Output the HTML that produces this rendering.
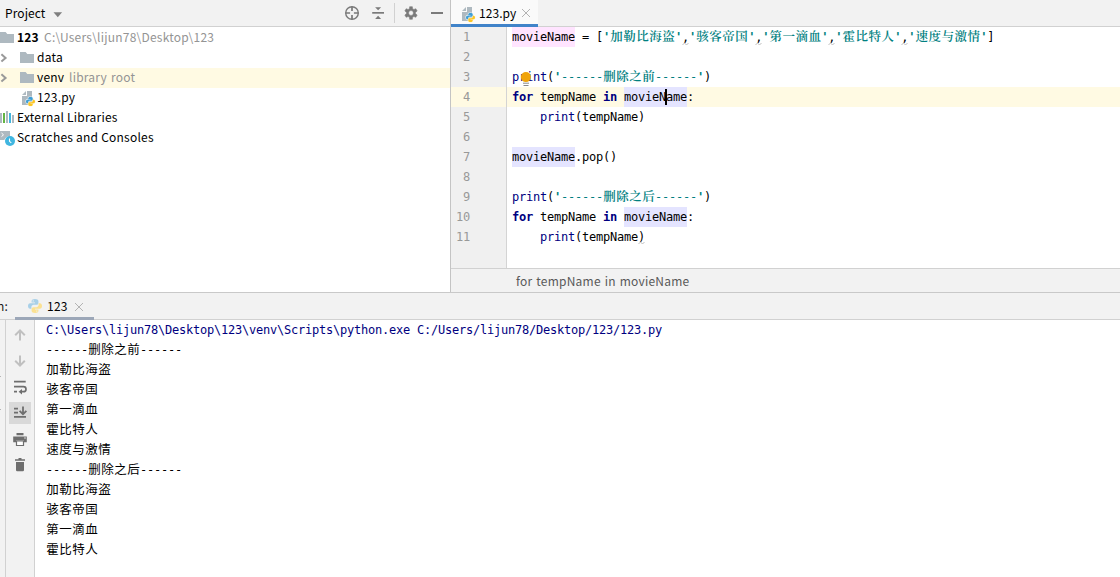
<!DOCTYPE html>
<html><head><meta charset="utf-8">
<style>
*{box-sizing:border-box;margin:0;padding:0}
html,body{width:1120px;height:577px;overflow:hidden;background:#fff}
body{position:relative;font-family:"Liberation Sans","Noto Sans CJK SC",sans-serif;font-size:12px;color:#000}
.abs{position:absolute}
.ui{font-family:"Noto Sans CJK SC","Liberation Sans",sans-serif;font-size:12px;letter-spacing:0.22px;white-space:nowrap}
.mono{font-family:"DejaVu Sans Mono","Noto Sans CJK SC",monospace;font-size:12px;letter-spacing:-0.224px;white-space:pre}
/* left project panel */
#ph{left:0;top:0;width:450px;height:27px;background:#f2f2f2;border-bottom:1px solid #d1d1d1}
#tree{left:0;top:27px;width:450px;height:265px;background:#fff}
.row{position:absolute;left:0;width:450px;height:20px;line-height:20px}
.row span{position:absolute;top:-1px}
.gray{color:#949494}
#vdiv{left:450px;top:0;width:1px;height:292px;background:#c4c4c4}
/* editor */
#tabs{left:451px;top:0;width:669px;height:27px;background:#f2f2f2;border-bottom:1px solid #d1d1d1}
#tab{left:451px;top:0;width:87px;height:24px;background:#fafafa}
#tabul{left:451px;top:24px;width:87px;height:3px;background:#4083c9}
#gutter{left:451px;top:27px;width:55px;height:241px;background:#f0f0f0}
#gline{left:506px;top:27px;width:1px;height:241px;background:#d4d4d4}
.ln{position:absolute;left:451px;width:55px;height:20px;line-height:20px;color:#999;font-family:"DejaVu Sans Mono",monospace;font-size:12px;letter-spacing:-0.224px}
.ln span{position:absolute;right:36px}
.cl{position:absolute;left:512px;height:20px;line-height:20px}
.kw{color:#000080;font-weight:bold}
.bi{color:#000080}
.st{color:#008080;font-weight:bold;font-family:"DejaVu Sans Mono","Noto Serif CJK SC",monospace}
.hw{background:#ffe4ff;padding:3px 0 3.03px}
.hr{background:#e4e4ff;padding:3px 0 3.03px}
#crow{left:451px;top:87px;width:669px;height:20px;background:#fffae3}
#crowg{left:451px;top:87px;width:55px;height:20px;background:#fcfaed}
#bc{left:451px;top:268px;width:669px;height:24px;background:#f2f2f2;border-top:1px solid #d1d1d1}
/* run panel */
#hsep{left:0;top:292px;width:1120px;height:1px;background:#c9c9c9}
#rh{left:0;top:293px;width:1120px;height:27px;background:#f2f2f2;border-bottom:1px solid #d1d1d1}
#rul{left:15px;top:317px;width:79px;height:3px;background:#9ca7b8}
#ls{left:0;top:320px;width:5px;height:257px;background:#f2f2f2}
#lsl{left:5px;top:320px;width:1px;height:257px;background:#d1d1d1}
#tb{left:6px;top:320px;width:28px;height:257px;background:#f2f2f2}
#tbl{left:34px;top:320px;width:1px;height:257px;background:#d1d1d1}
.co{position:absolute;left:46px;height:20px;line-height:20px;font-family:"DejaVu Sans Mono","Noto Sans CJK SC",monospace;font-size:12px;letter-spacing:-0.224px;white-space:pre}
.cj{font-family:"Noto Sans CJK SC",sans-serif;font-size:12.5px;letter-spacing:0.5px;line-height:0;margin-left:0.25px;margin-right:-0.25px}
.st .cj{font-family:"Noto Serif CJK SC",serif;font-weight:600}
.nb{font-weight:normal}
</style></head><body>
<div id="ph" class="abs"></div>
<div id="tree" class="abs"></div>
<div id="vdiv" class="abs"></div>
<div id="tabs" class="abs"></div>
<div id="tab" class="abs"></div>
<div id="tabul" class="abs"></div>
<div id="gutter" class="abs"></div>
<div id="crow" class="abs"></div>
<div id="gline" class="abs"></div>
<div id="bc" class="abs"></div>
<div id="hsep" class="abs"></div>
<div id="rh" class="abs"></div>
<div id="rul" class="abs"></div>
<div id="ls" class="abs"></div><div id="lsl" class="abs"></div>
<div id="tb" class="abs"></div><div id="tbl" class="abs"></div>

<!-- project header -->
<div class="abs ui" style="left:5px;top:0;height:26px;line-height:26px;letter-spacing:0.08px" id="t_project">Project</div>
<svg class="abs" style="left:53px;top:12px" width="10" height="6" viewBox="0 0 10 6"><path d="M0.5 0.3h8.6l-4.3 4.9z" fill="#7f7f7f"/></svg>
<!-- tree -->
<div class="row" style="top:68px;background:#fffae3"></div>
<div class="row ui" style="top:28px"><span style="left:17px;font-weight:bold" id="t_123">123</span><span class="gray" style="left:44px" id="t_path">C:\Users\lijun78\Desktop\123</span></div>
<div class="row ui" style="top:48px"><span style="left:37px" id="t_data">data</span></div>
<div class="row ui" style="top:68px"><span style="left:37px" id="t_venv">venv</span><span class="gray" style="left:69px;word-spacing:1px" id="t_lib">library root</span></div>
<div class="row ui" style="top:88px"><span style="left:37px" id="t_py">123.py</span></div>
<div class="row ui" style="top:108px"><span style="left:17px" id="t_ext">External Libraries</span></div>
<div class="row ui" style="top:128px"><span style="left:17px" id="t_scr">Scratches and Consoles</span></div>
<svg class="abs" style="left:-1px;top:30px" width="16" height="16" viewBox="0 0 16 16"><path d="M1 2h5.6l1.7 2H15v9H1z" fill="#aeb9c0"/></svg><svg class="abs" style="left:-1px;top:50px" width="16" height="16" viewBox="0 0 16 16"><path d="M2.4 4.2L6.6 7.9L2.4 11.6" fill="none" stroke="#9a9a9a" stroke-width="2"/></svg><svg class="abs" style="left:19px;top:50px" width="16" height="16" viewBox="0 0 16 16"><path d="M1 2h5.6l1.7 2H15v9H1z" fill="#aeb9c0"/></svg><svg class="abs" style="left:-1px;top:70px" width="16" height="16" viewBox="0 0 16 16"><path d="M2.4 4.2L6.6 7.9L2.4 11.6" fill="none" stroke="#9a9a9a" stroke-width="2"/></svg><svg class="abs" style="left:19px;top:70px" width="16" height="16" viewBox="0 0 16 16"><path d="M1 2h5.6l1.7 2H15v9H1z" fill="#aeb9c0"/></svg><svg class="abs" style="left:19px;top:90px" width="17" height="17" viewBox="0 0 17 17"><path d="M7 1L3 5h4z" fill="#aeb9c0"/><path d="M8 1v5H3v9h10V1z" fill="#aeb9c0"/>
<g transform="translate(7,7) scale(0.643)"><path d="M6.9 0C5 0 3.6 0.7 3.6 2V3.6H7V4.2H2.2C0.8 4.2 0 5.4 0 7C0 8.6 0.8 9.8 2.2 9.8H3.4V8C3.4 6.8 4.4 5.8 5.6 5.8H8.6C9.6 5.8 10.4 5 10.4 4V2C10.4 0.8 9 0 6.9 0Z M7.1 14C9 14 10.4 13.3 10.4 12V10.4H7V9.8H11.8C13.2 9.8 14 8.6 14 7C14 5.4 13.2 4.2 11.8 4.2H10.6V6C10.6 7.2 9.6 8.2 8.4 8.2H5.4C4.4 8.2 3.6 9 3.6 10V12C3.6 13.2 5 14 7.1 14Z" fill="#fff" stroke="#fff" stroke-width="1.8" stroke-linejoin="round"/><path d="M6.9 0C5 0 3.6 0.7 3.6 2V3.6H7V4.2H2.2C0.8 4.2 0 5.4 0 7C0 8.6 0.8 9.8 2.2 9.8H3.4V8C3.4 6.8 4.4 5.8 5.6 5.8H8.6C9.6 5.8 10.4 5 10.4 4V2C10.4 0.8 9 0 6.9 0Z" fill="#3f9ed6" stroke="#3f9ed6" stroke-width="0.3"/><path d="M7.1 14C9 14 10.4 13.3 10.4 12V10.4H7V9.8H11.8C13.2 9.8 14 8.6 14 7C14 5.4 13.2 4.2 11.8 4.2H10.6V6C10.6 7.2 9.6 8.2 8.4 8.2H5.4C4.4 8.2 3.6 9 3.6 10V12C3.6 13.2 5 14 7.1 14Z" fill="#fcc624" stroke="#fcc624" stroke-width="0.3"/></g></svg><svg class="abs" style="left:-1px;top:110px" width="16" height="16" viewBox="0 0 16 16"><rect x="1" y="3" width="2" height="10" fill="#aeb9c0"/><rect x="4" y="3" width="2" height="10" fill="#62b543"/><rect x="7" y="1" width="2" height="12" fill="#aeb9c0"/><rect x="10" y="3" width="2" height="10" fill="#40b6e0"/><rect x="13" y="5" width="2" height="8" fill="#aeb9c0"/></svg><svg class="abs" style="left:-1px;top:130px" width="17" height="17" viewBox="0 0 17 17"><path d="M1 1h10v5.2A5.8 5.8 0 0 0 5.3 10H1z" fill="#aeb9c0"/><path d="M2.5 3l2 1.8-2 1.8" fill="none" stroke="#fff" stroke-width="1"/><circle cx="11" cy="11" r="5" fill="#40b6e0"/><path d="M10.5 8.5v2.8l1.8 1.6" fill="none" stroke="#fff" stroke-width="1.1"/></svg><svg class="abs" style="left:344px;top:5px" width="16" height="16" viewBox="0 0 16 16"><circle cx="8" cy="8" r="6.3" fill="none" stroke="#7a7a7a" stroke-width="1.4"/><path d="M8 1.5v4.6M8 9.9v4.6M1.5 8h4.6M9.9 8h4.6" stroke="#7a7a7a" stroke-width="1.7"/></svg><svg class="abs" style="left:370px;top:5px" width="16" height="16" viewBox="0 0 16 16"><path d="M2.2 7h11.8v1.7H2.2z" fill="#7a7a7a"/><path d="M5.1 2.2h6L8.1 5.2z M5.1 13.9h6L8.1 10.7z" fill="#7a7a7a"/></svg><div class="abs" style="left:394px;top:3px;width:1px;height:20px;background:#d1d1d1"></div><svg class="abs" style="left:403px;top:5px" width="16" height="16" viewBox="0 0 16 16"><path d="M6.65 1.64 L9.35 1.64 L9.62 3.69 L10.92 4.44 L12.83 3.65 L14.18 5.99 L12.54 7.25 L12.54 8.75 L14.18 10.01 L12.83 12.35 L10.92 11.56 L9.62 12.31 L9.35 14.36 L6.65 14.36 L6.38 12.31 L5.08 11.56 L3.17 12.35 L1.82 10.01 L3.46 8.75 L3.46 7.25 L1.82 5.99 L3.17 3.65 L5.08 4.44 L6.38 3.69Z M8 5.6a2.4 2.4 0 1 0 0.001 0z" fill="#7a7a7a" fill-rule="evenodd" stroke="#7a7a7a" stroke-width="0.5" stroke-linejoin="round"/></svg><div class="abs" style="left:431px;top:12px;width:12px;height:2px;background:#7a7a7a"></div><svg class="abs" style="left:459px;top:6px" width="17" height="17" viewBox="0 0 17 17"><path d="M7 1L3 5h4z" fill="#aeb9c0"/><path d="M8 1v5H3v9h10V1z" fill="#aeb9c0"/>
<g transform="translate(7,7) scale(0.643)"><path d="M6.9 0C5 0 3.6 0.7 3.6 2V3.6H7V4.2H2.2C0.8 4.2 0 5.4 0 7C0 8.6 0.8 9.8 2.2 9.8H3.4V8C3.4 6.8 4.4 5.8 5.6 5.8H8.6C9.6 5.8 10.4 5 10.4 4V2C10.4 0.8 9 0 6.9 0Z M7.1 14C9 14 10.4 13.3 10.4 12V10.4H7V9.8H11.8C13.2 9.8 14 8.6 14 7C14 5.4 13.2 4.2 11.8 4.2H10.6V6C10.6 7.2 9.6 8.2 8.4 8.2H5.4C4.4 8.2 3.6 9 3.6 10V12C3.6 13.2 5 14 7.1 14Z" fill="#fff" stroke="#fff" stroke-width="1.8" stroke-linejoin="round"/><path d="M6.9 0C5 0 3.6 0.7 3.6 2V3.6H7V4.2H2.2C0.8 4.2 0 5.4 0 7C0 8.6 0.8 9.8 2.2 9.8H3.4V8C3.4 6.8 4.4 5.8 5.6 5.8H8.6C9.6 5.8 10.4 5 10.4 4V2C10.4 0.8 9 0 6.9 0Z" fill="#3f9ed6" stroke="#3f9ed6" stroke-width="0.3"/><path d="M7.1 14C9 14 10.4 13.3 10.4 12V10.4H7V9.8H11.8C13.2 9.8 14 8.6 14 7C14 5.4 13.2 4.2 11.8 4.2H10.6V6C10.6 7.2 9.6 8.2 8.4 8.2H5.4C4.4 8.2 3.6 9 3.6 10V12C3.6 13.2 5 14 7.1 14Z" fill="#fcc624" stroke="#fcc624" stroke-width="0.3"/></g></svg><svg class="abs" style="left:521px;top:8px" width="10" height="10" viewBox="0 0 10 10"><path d="M1 1l8 8M9 1l-8 8" stroke="#b3b3b3" stroke-width="1" fill="none"/></svg><svg class="abs" style="left:74px;top:302px" width="10" height="10" viewBox="0 0 10 10"><path d="M1 1l8 8M9 1l-8 8" stroke="#b3b3b3" stroke-width="1" fill="none"/></svg><svg class="abs" style="left:28px;top:299px" width="14" height="14" viewBox="0 0 14 14"><path d="M6.9 0C5 0 3.6 0.7 3.6 2V3.6H7V4.2H2.2C0.8 4.2 0 5.4 0 7C0 8.6 0.8 9.8 2.2 9.8H3.4V8C3.4 6.8 4.4 5.8 5.6 5.8H8.6C9.6 5.8 10.4 5 10.4 4V2C10.4 0.8 9 0 6.9 0Z" fill="#a8d0e8"/><path d="M7.1 14C9 14 10.4 13.3 10.4 12V10.4H7V9.8H11.8C13.2 9.8 14 8.6 14 7C14 5.4 13.2 4.2 11.8 4.2H10.6V6C10.6 7.2 9.6 8.2 8.4 8.2H5.4C4.4 8.2 3.6 9 3.6 10V12C3.6 13.2 5 14 7.1 14Z" fill="#fbe192"/><circle cx="5.2" cy="1.9" r="0.7" fill="#f2f2f2"/><circle cx="8.8" cy="12.1" r="0.7" fill="#f2f2f2"/></svg><svg class="abs" style="left:12px;top:327px" width="16" height="16" viewBox="0 0 16 16"><path d="M8 13.6V3.6M3.2 8.2l4.8-4.8 4.8 4.8" fill="none" stroke="#c0c0c0" stroke-width="2"/></svg><svg class="abs" style="left:12px;top:353px" width="16" height="16" viewBox="0 0 16 16"><path d="M8 2.4v10M3.2 7.8l4.8 4.8 4.8-4.8" fill="none" stroke="#c0c0c0" stroke-width="2"/></svg><svg class="abs" style="left:12px;top:379px" width="16" height="16" viewBox="0 0 16 16"><path d="M2 2.7h11.7M2 7.7h9.5a2.4 2.4 0 0 1 0 5H9M2 12.7h3" fill="none" stroke="#6e6e6e" stroke-width="1.7"/><path d="M10 10v5.4l-3.4-2.7z" fill="#6e6e6e"/></svg><div class="abs" style="left:9px;top:402px;width:22px;height:22px;background:#d9d9d9"></div><svg class="abs" style="left:12px;top:405px" width="16" height="16" viewBox="0 0 16 16"><path d="M2 3.7h4M2 7.6h4M2 11.8h12M11 1.5v7.5M7.6 5.8l3.4 3.4 3.4-3.4" fill="none" stroke="#6e6e6e" stroke-width="1.8"/></svg><svg class="abs" style="left:12px;top:431px" width="16" height="16" viewBox="0 0 16 16"><path d="M4.5 2h7v2.3h-7z M1.2 5.5h13.6v5.8H12V9.5H4v1.8H1.2z" fill="#6e6e6e"/><path d="M4.5 10h7v4.5h-7z" fill="#fff" stroke="#6e6e6e" stroke-width="1.2"/><circle cx="13" cy="7" r="0.7" fill="#fff"/></svg><svg class="abs" style="left:12px;top:457px" width="16" height="16" viewBox="0 0 16 16"><path d="M3 2.2h10v1.6H3z M6.5 1h3v1.5h-3z M4 5h8v8a1.2 1.2 0 0 1-1.2 1.2H5.2A1.2 1.2 0 0 1 4 13z" fill="#6e6e6e"/></svg><svg class="abs" style="left:519px;top:70px;z-index:5" width="14" height="18" viewBox="0 0 14 18"><circle cx="6.9" cy="7.1" r="5" fill="#f0a30a"/><path d="M4 13.2h6M4.5 15.5h5" stroke="#7a7a7a" stroke-width="0.9"/></svg><div class="abs" style="left:665px;top:89px;width:2px;height:16px;background:#000;z-index:5"></div>
<svg class="abs" style="left:682px;top:42px" width="8" height="4" viewBox="0 0 8 4"><path d="M0.5 3L2.5 1L4.5 3L6.5 1" fill="none" stroke="#b8b8b8" stroke-width="0.9"/></svg><svg class="abs" style="left:755px;top:42px" width="8" height="4" viewBox="0 0 8 4"><path d="M0.5 3L2.5 1L4.5 3L6.5 1" fill="none" stroke="#b8b8b8" stroke-width="0.9"/></svg><svg class="abs" style="left:828px;top:42px" width="8" height="4" viewBox="0 0 8 4"><path d="M0.5 3L2.5 1L4.5 3L6.5 1" fill="none" stroke="#b8b8b8" stroke-width="0.9"/></svg><svg class="abs" style="left:901px;top:42px" width="8" height="4" viewBox="0 0 8 4"><path d="M0.5 3L2.5 1L4.5 3L6.5 1" fill="none" stroke="#b8b8b8" stroke-width="0.9"/></svg><svg class="abs" style="left:638px;top:241px" width="8" height="4" viewBox="0 0 8 4"><path d="M0.5 3L2.5 1L4.5 3L6.5 1" fill="none" stroke="#b8b8b8" stroke-width="0.9"/></svg>
<div class="abs" style="left:0;top:376px;width:1px;height:1px;background:#b5b5b5"></div><div class="abs" style="left:0;top:409px;width:1px;height:1px;background:#b5b5b5"></div>
<!-- editor tab -->
<div class="abs ui" style="left:479px;top:1px;height:24px;line-height:24px;letter-spacing:0.05px" id="t_tab">123.py</div>
<!-- line numbers -->
<div class="ln" style="top:27px"><span>1</span></div>
<div class="ln" style="top:47px"><span>2</span></div>
<div class="ln" style="top:67px"><span>3</span></div>
<div class="ln" style="top:87px"><span>4</span></div>
<div class="ln" style="top:107px"><span>5</span></div>
<div class="ln" style="top:127px"><span>6</span></div>
<div class="ln" style="top:147px"><span>7</span></div>
<div class="ln" style="top:167px"><span>8</span></div>
<div class="ln" style="top:187px"><span>9</span></div>
<div class="ln" style="top:207px"><span>10</span></div>
<div class="ln" style="top:227px"><span>11</span></div>

<!-- code -->
<div class="cl mono" style="top:27px"><span class="hw">movieName</span> = [<span class="st">'<span class="cj">加勒比海盗</span>'</span>,<span class="st">'<span class="cj">骇客帝国</span>'</span>,<span class="st">'<span class="cj">第一滴血</span>'</span>,<span class="st">'<span class="cj">霍比特人</span>'</span>,<span class="st">'<span class="cj">速度与激情</span>'</span>]</div>
<div class="cl mono" style="top:67px"><span class="bi">print</span>(<span class="st">'<span class="nb">------</span><span class="cj">删除之前</span><span class="nb">------</span>'</span>)</div>
<div class="cl mono" style="top:87px"><span class="kw">for</span> tempName <span class="kw">in</span> <span class="hr">movieName</span>:</div>
<div class="cl mono" style="top:107px">    <span class="bi">print</span>(tempName)</div>
<div class="cl mono" style="top:147px"><span class="hr">movieName</span>.pop()</div>
<div class="cl mono" style="top:187px"><span class="bi">print</span>(<span class="st">'<span class="nb">------</span><span class="cj">删除之后</span><span class="nb">------</span>'</span>)</div>
<div class="cl mono" style="top:207px"><span class="kw">for</span> tempName <span class="kw">in</span> <span class="hr">movieName</span>:</div>
<div class="cl mono" style="top:227px">    <span class="bi">print</span>(tempName)</div>

<div class="abs ui" style="left:516px;top:269px;height:23px;line-height:23px;color:#595959;word-spacing:1px" id="t_bc">for tempName in movieName</div>
<!-- run header -->
<div class="abs ui" style="right:1112px;top:292px;height:27px;line-height:27px;color:#1a1a1a">Run:</div>
<div class="abs ui" style="left:47px;top:292px;height:27px;line-height:27px" id="t_run">123</div>
<div class="co" style="top:320px"><span style="color:#000080">C:\Users\lijun78\Desktop\123\venv\Scripts\python.exe C:/Users/lijun78/Desktop/123/123.py</span></div>
<div class="co" style="top:340px">------<span class="cj">删除之前</span>------</div>
<div class="co" style="top:360px"><span class="cj">加勒比海盗</span></div>
<div class="co" style="top:380px"><span class="cj">骇客帝国</span></div>
<div class="co" style="top:400px"><span class="cj">第一滴血</span></div>
<div class="co" style="top:420px"><span class="cj">霍比特人</span></div>
<div class="co" style="top:440px"><span class="cj">速度与激情</span></div>
<div class="co" style="top:460px">------<span class="cj">删除之后</span>------</div>
<div class="co" style="top:480px"><span class="cj">加勒比海盗</span></div>
<div class="co" style="top:500px"><span class="cj">骇客帝国</span></div>
<div class="co" style="top:520px"><span class="cj">第一滴血</span></div>
<div class="co" style="top:540px"><span class="cj">霍比特人</span></div>

</body></html>
